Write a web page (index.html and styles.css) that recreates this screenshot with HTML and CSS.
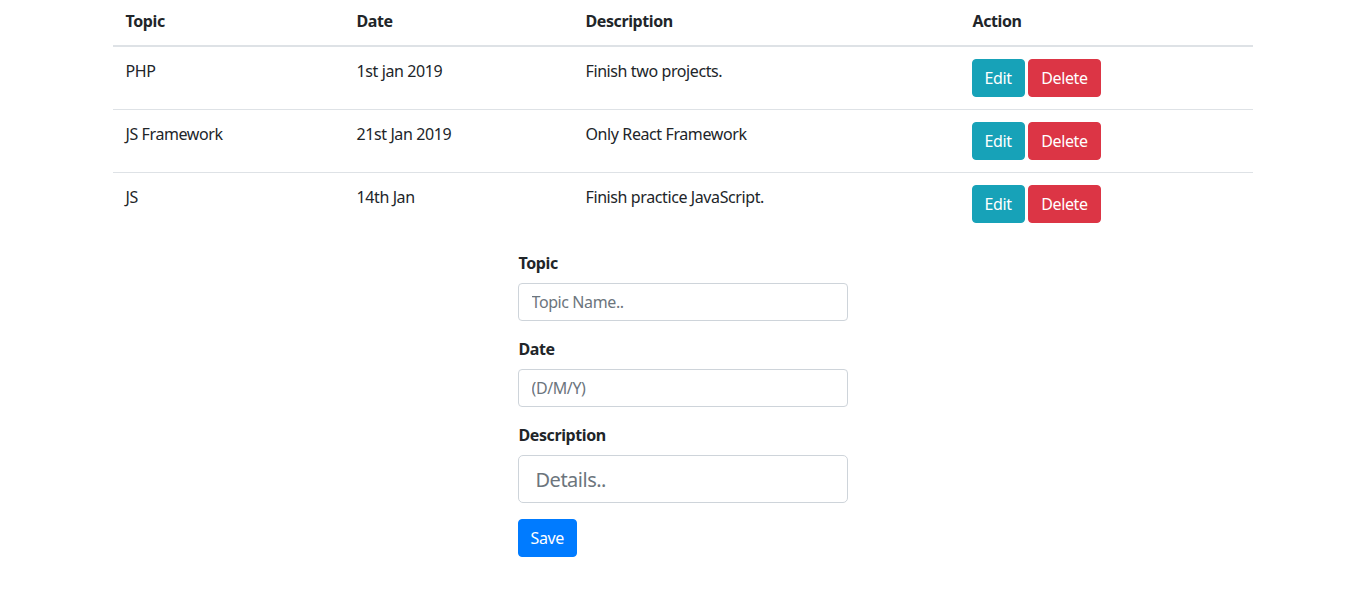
FILE: index.html
```html
<!DOCTYPE html>
<html lang="en">
<head>
<meta charset="utf-8">
<title>Topics</title>
<link rel="stylesheet" href="styles.css">
</head>
<body>
<div class="container">
  <table class="table">
    <thead>
      <tr>
        <th class="c1">Topic</th>
        <th class="c2">Date</th>
        <th class="c3">Description</th>
        <th class="c4">Action</th>
      </tr>
    </thead>
    <tbody>
      <tr>
        <td>PHP</td>
        <td>1st jan 2019</td>
        <td>Finish two projects.</td>
        <td><button class="btn btn-info">Edit</button> <button class="btn btn-danger">Delete</button></td>
      </tr>
      <tr>
        <td>JS Framework</td>
        <td>21st Jan 2019</td>
        <td>Only React Framework</td>
        <td><button class="btn btn-info">Edit</button> <button class="btn btn-danger">Delete</button></td>
      </tr>
      <tr>
        <td>JS</td>
        <td>14th Jan</td>
        <td>Finish practice JavaScript.</td>
        <td><button class="btn btn-info">Edit</button> <button class="btn btn-danger">Delete</button></td>
      </tr>
    </tbody>
  </table>

  <form class="form">
    <div class="form-group">
      <label class="label">Topic</label>
      <input class="form-control" type="text" placeholder="Topic Name..">
    </div>
    <div class="form-group">
      <label class="label">Date</label>
      <input class="form-control" type="text" placeholder="(D/M/Y)">
    </div>
    <div class="form-group">
      <label class="label">Description</label>
      <input class="form-control form-control-lg" type="text" placeholder="Details..">
    </div>
    <button type="button" class="btn btn-primary">Save</button>
  </form>
</div>
</body>
</html>
```

FILE: styles.css
```css
* { box-sizing: border-box; }
html, body { margin: 0; padding: 0; }
body {
  font-family: "Noto Sans", "Open Sans", sans-serif;
  font-size: 16px;
  line-height: 1.5;
  letter-spacing: -0.4px;
  color: #212529;
  background: #fff;
}
.container {
  width: 1140px;
  margin: -3px auto 0;
}
.table {
  width: 100%;
  border-collapse: collapse;
  margin-bottom: 16px;
}
.table th, .table td {
  padding: 12px 12px 12px 13px;
  text-align: left;
  vertical-align: top;
  border-top: 1px solid #dee2e6;
}
.table th {
  font-weight: 700;
  border-top: none;
  border-bottom: 2px solid #dee2e6;
}
.c1 { width: 231px; }
.c2 { width: 229px; }
.c3 { width: 387px; }
.c4 { width: 293px; }
.btn {
  display: inline-block;
  font-family: inherit;
  font-size: 16px;
  line-height: 24px;
  letter-spacing: -0.4px;
  padding: 6px 12px;
  border: 1px solid transparent;
  border-radius: 4px;
  color: #fff;
  cursor: pointer;
  vertical-align: middle;
}
.table .btn-info { margin-left: -1px; }
.btn-info { background: #17a2b8; border-color: #17a2b8; }
.btn-danger { background: #dc3545; border-color: #dc3545; }
.btn-primary { background: #007bff; border-color: #007bff; }
.form {
  width: 330px;
  margin: 0 auto;
}
.form-group { margin-bottom: 16px; }
.label {
  display: block;
  font-weight: 700;
  margin-bottom: 8px;
  padding-left: 1px;
}
.form-control {
  display: block;
  width: 100%;
  height: 38px;
  padding: 6px 13px;
  font-family: inherit;
  font-size: 16px;
  line-height: 24px;
  letter-spacing: -0.4px;
  color: #495057;
  border: 1px solid #ced4da;
  border-radius: 4px;
  background: #fff;
}
.form-control::placeholder { color: #6c757d; opacity: 1; }
.form-control-lg {
  height: 48px;
  padding: 8px 17px;
  font-size: 20px;
  line-height: 30px;
  letter-spacing: -0.5px;
  border-radius: 5px;
}
```
